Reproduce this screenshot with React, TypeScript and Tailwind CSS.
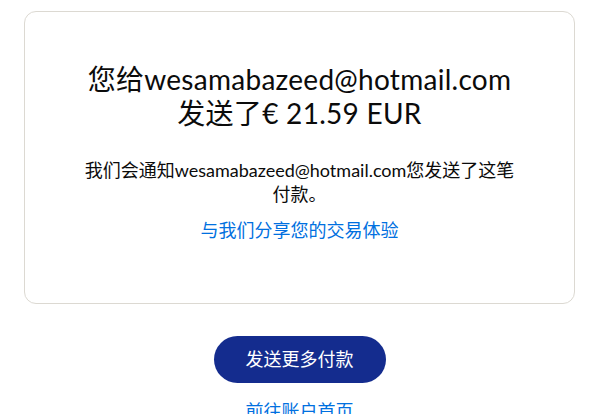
const font = { fontFamily: '"Lato", "Noto Sans CJK SC", sans-serif' };

const App = () => {
  return (
    <div className="min-h-screen bg-white text-[#0b0b0b]" style={font}>
      <div className="px-6 pt-[11px]">
        <div className="rounded-xl border border-[#dcd9d2] bg-white px-[58px] pt-[50px] pb-[60px] text-center">
          <h1 className="text-[28px] leading-[34px] font-normal tracking-[0.01em]">
            您给wesamabazeed@hotmail.com发送了€ 21.59 EUR
          </h1>
          <p className="mt-[28px] text-[18px] leading-[24px]">
            我们会通知wesamabazeed@hotmail.com您发送了这笔付款。
          </p>
          <a href="#" className="mt-[12px] inline-block text-[18px] leading-[24px] text-[#0070e0]">
            与我们分享您的交易体验
          </a>
        </div>
      </div>
      <div className="mt-[32px] flex flex-col items-center">
        <button className="h-[47px] w-[172px] rounded-full bg-[#142c8e] text-[18px] text-white">
          发送更多付款
        </button>
        <a href="#" className="mt-[16px] text-[18px] leading-[24px] text-[#0070e0]">
          前往账户首页
        </a>
      </div>
    </div>
  );
};

export default App;
